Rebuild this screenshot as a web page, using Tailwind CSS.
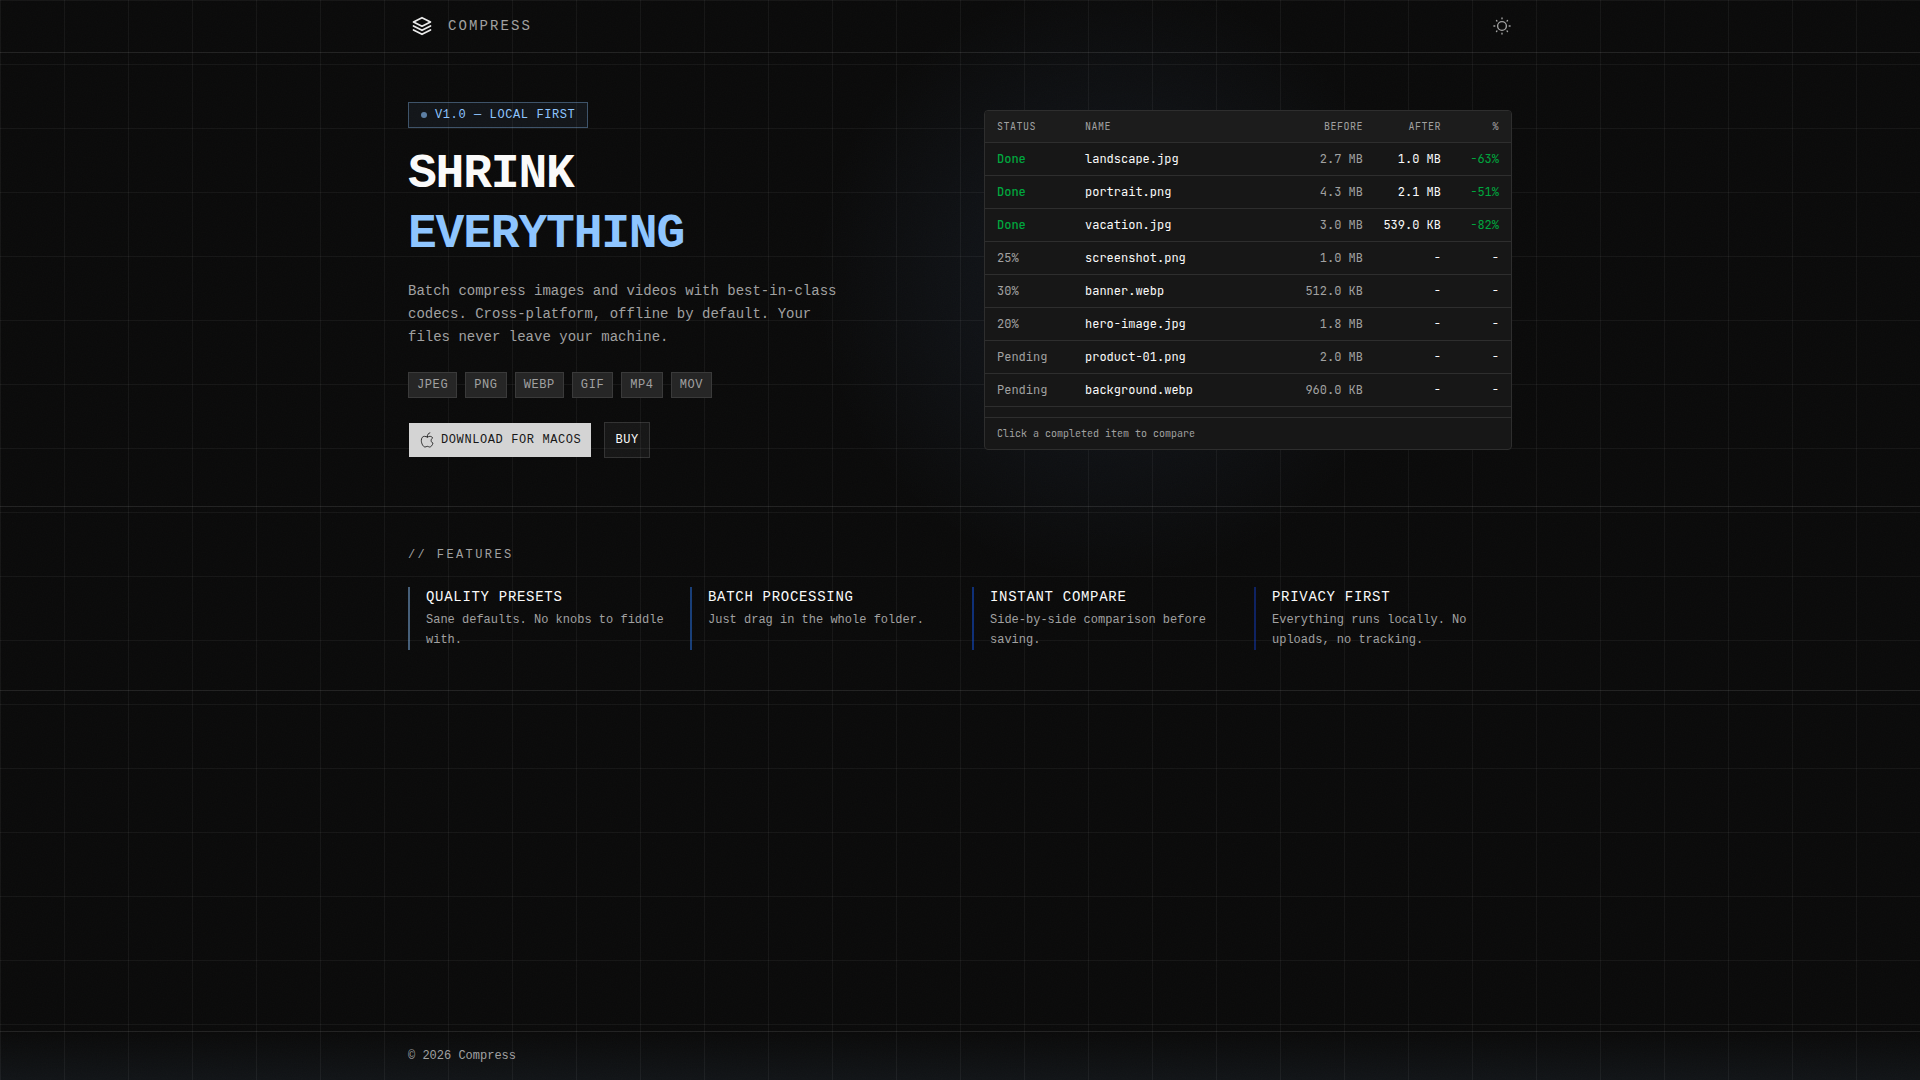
<!DOCTYPE html>
<html lang="en">
<head>
  <meta charset="UTF-8">
  <meta name="viewport" content="width=device-width, initial-scale=1">
  <title>Compress</title>
  <script src="https://cdn.jsdelivr.net/npm/@tailwindcss/browser@4"></script>
</head>
<body class="relative isolate flex min-h-screen flex-col bg-[#0a0a0a] font-['Liberation_Mono',monospace] text-neutral-50">

  <!-- background: glows, grid, grain -->
  <div class="pointer-events-none absolute inset-0 -z-10 overflow-hidden" aria-hidden="true">
    <div class="absolute inset-0 bg-[radial-gradient(ellipse_300px_300px_at_58%_26%,#7fb0ff12,#7fb0ff0c_50%,transparent)]"></div>
    <div class="absolute inset-x-0 bottom-0 h-12 bg-linear-to-t from-[#8ec5ff0e] to-transparent"></div>
    <div class="absolute inset-0 bg-[linear-gradient(to_right,#ffffff0d_1px,transparent_1px),linear-gradient(to_bottom,#ffffff0d_1px,transparent_1px)] bg-size-[64px_64px]"></div>
    <svg class="absolute inset-0 size-full opacity-[0.02]">
      <filter id="grain"><feTurbulence type="fractalNoise" baseFrequency="0.8" numOctaves="4" stitchTiles="stitch" /></filter>
      <rect width="100%" height="100%" filter="url(#grain)" />
    </svg>
  </div>

  <header class="border-b border-white/10">
    <div class="mx-auto flex h-13 w-full max-w-6xl items-center justify-between px-6">
      <a href="#" class="flex items-center gap-3">
        <svg class="size-7" viewBox="0 0 28 28" fill="none" stroke="#ebebeb" stroke-width="1.7" stroke-linejoin="round" stroke-linecap="round">
          <path d="M14 5.700 22.500 9.900 14 14.200 5.500 9.900Z" />
          <path d="m5.500 13.900 8.500 4.400 8.500-4.400M5.500 17.900l8.500 4.400 8.500-4.400" />
        </svg>
        <span class="text-sm tracking-[0.15em] text-neutral-400">COMPRESS</span>
      </a>
      <button type="button" aria-label="Toggle theme" class="text-neutral-400">
        <svg class="size-5" viewBox="0 0 20 20" fill="none" stroke="currentColor" stroke-width="1.4" stroke-linecap="round">
          <circle cx="10" cy="10" r="4.400" />
          <path d="M10 1.900v.9M10 17.200v.9M1.900 10h.9M17.200 10h.9M4.500 4.500l.4.400M15.100 15.100l.4.400M4.500 15.500l.4-.4M15.100 4.900l.4-.4" />
        </svg>
      </button>
    </div>
  </header>

  <main class="flex-1">
    <section class="border-b border-white/10">
      <div class="mx-auto grid w-full max-w-6xl items-center gap-12 px-6 py-12 lg:grid-cols-2">
        <div>
          <div class="flex h-[27px] items-end">
            <span class="flex items-center gap-2 border border-[#8ec5ff]/35 bg-[#8ec5ff]/6 px-3 py-1 text-xs tracking-wider text-[#8ec5ff]">
              <span class="size-1.5 rounded-full bg-[#8ec5ff]/60"></span>V1.0 — LOCAL FIRST
            </span>
          </div>
          <h1 class="mt-4 text-5xl leading-tight font-bold tracking-tight">
            SHRINK<br><span class="text-[#8ec5ff]">EVERYTHING</span>
          </h1>
          <p class="mt-4 max-w-md text-sm leading-relaxed text-neutral-400">Batch compress images and videos with best-in-class codecs. Cross-platform, offline by default. Your files never leave your machine.</p>
          <ul class="mt-6 flex flex-wrap gap-2 text-xs tracking-wider text-neutral-400">
            <li class="border border-[#3a3a3a] bg-[#262626] px-2 py-1">JPEG</li>
            <li class="border border-[#3a3a3a] bg-[#262626] px-2 py-1">PNG</li>
            <li class="border border-[#3a3a3a] bg-[#262626] px-2 py-1">WEBP</li>
            <li class="border border-[#3a3a3a] bg-[#262626] px-2 py-1">GIF</li>
            <li class="border border-[#3a3a3a] bg-[#262626] px-2 py-1">MP4</li>
            <li class="border border-[#3a3a3a] bg-[#262626] px-2 py-1">MOV</li>
          </ul>
          <div class="mt-6 flex gap-3 text-xs tracking-wider">
            <button type="button" class="flex h-9 items-center gap-1.5 border border-transparent bg-[#d4d4d4] bg-clip-padding px-2.5 text-neutral-900">
              <svg class="size-4" viewBox="0 0 24 24" fill="none" stroke="currentColor" stroke-width="1.3" stroke-linejoin="round" stroke-linecap="round">
                <path d="M12.500 7.500c-1.500 0-2.500-1-4.300-1C5.300 6.500 3.500 9 3.500 12.800c0 4.300 2.800 9.700 5.600 9.700 1.400 0 2-1 3.400-1s2 1 3.400 1c2.300 0 4.300-2.900 5.100-5.800-1.900-.8-2.800-2.200-2.800-3.900 0-1.700.9-3.100 2.300-3.900-.9-1.500-2.300-2.400-4.200-2.400-1.500 0-2.400 1-3.800 1Z" />
                <path d="M12.500 6.500c0-2.700 1.400-4.500 3.800-5.200" />
              </svg>
              DOWNLOAD FOR MACOS
            </button>
            <button type="button" class="h-9 border border-white/12 bg-white/5 px-2.5">BUY</button>
          </div>
        </div>

        <div class="overflow-hidden rounded border border-[#2e2e2e] bg-[#171717] font-['JetBrains_Mono','Liberation_Mono',monospace]">
          <table class="w-full table-fixed text-right text-xs">
            <thead>
              <tr class="border-b border-[#2e2e2e] bg-[#1c1c1c] text-[10px] leading-[15px] tracking-wider text-neutral-400">
                <th class="w-22 px-3 py-2 text-left font-normal">STATUS</th>
                <th class="px-3 py-2 text-left font-normal">NAME</th>
                <th class="w-30 px-3 py-2 font-normal">BEFORE</th>
                <th class="w-[78px] px-3 py-2 font-normal">AFTER</th>
                <th class="w-[58px] px-3 py-2 font-normal">%</th>
              </tr>
            </thead>
            <tbody id="queue"></tbody>
          </table>
          <p class="mt-2.5 border-t border-[#2e2e2e] px-3 py-2 text-[10px] leading-[15px] text-neutral-400">Click a completed item to compare</p>
        </div>
      </div>
    </section>

    <section class="border-b border-white/10">
      <div class="mx-auto w-full max-w-6xl px-6 py-10">
        <h2 class="text-xs tracking-[0.2em] text-neutral-400">// FEATURES</h2>
        <div class="mt-6 grid gap-6 md:grid-cols-4">
          <article class="border-l-2 border-[#8ec5ff]/45 pl-4">
            <h3 class="text-sm tracking-wider">QUALITY PRESETS</h3>
            <p class="mt-1 text-xs leading-relaxed text-neutral-400">Sane defaults. No knobs to fiddle with.</p>
          </article>
          <article class="border-l-2 border-[#2b7fff]/45 pl-4">
            <h3 class="text-sm tracking-wider">BATCH PROCESSING</h3>
            <p class="mt-1 text-xs leading-relaxed text-neutral-400">Just drag in the whole folder.</p>
          </article>
          <article class="border-l-2 border-[#155dfc]/45 pl-4">
            <h3 class="text-sm tracking-wider">INSTANT COMPARE</h3>
            <p class="mt-1 text-xs leading-relaxed text-neutral-400">Side-by-side comparison before saving.</p>
          </article>
          <article class="border-l-2 border-[#1447e6]/40 pl-4">
            <h3 class="text-sm tracking-wider">PRIVACY FIRST</h3>
            <p class="mt-1 text-xs leading-relaxed text-neutral-400">Everything runs locally. No uploads, no tracking.</p>
          </article>
        </div>
      </div>
    </section>
  </main>

  <footer class="border-t border-white/10">
    <p class="mx-auto w-full max-w-6xl px-6 py-4 text-xs text-neutral-400">© 2026 Compress</p>
  </footer>

  <script>
    const files = [
      ['Done', 'landscape.jpg', '2.7 MB', '1.0 MB', '-63%'],
      ['Done', 'portrait.png', '4.3 MB', '2.1 MB', '-51%'],
      ['Done', 'vacation.jpg', '3.0 MB', '539.0 KB', '-82%'],
      ['25%', 'screenshot.png', '1.0 MB', '-', '-'],
      ['30%', 'banner.webp', '512.0 KB', '-', '-'],
      ['20%', 'hero-image.jpg', '1.8 MB', '-', '-'],
      ['Pending', 'product-01.png', '2.0 MB', '-', '-'],
      ['Pending', 'background.webp', '960.0 KB', '-', '-'],
    ];

    document.getElementById('queue').innerHTML = files.map(([status, name, before, after, pct]) => {
      const done = status === 'Done';
      return `<tr class="border-b border-[#2e2e2e] ${done ? 'cursor-pointer' : ''}">
        <td class="px-3 py-2 text-left ${done ? 'font-medium text-[#00a63e]' : 'text-neutral-400'}">${status}</td>
        <td class="px-3 py-2 text-left">${name}</td>
        <td class="px-3 py-2 text-neutral-400">${before}</td>
        <td class="py-2 pr-3 whitespace-nowrap">${after}</td>
        <td class="px-3 py-2 ${done ? 'text-[#00a63e]' : ''}">${pct}</td>
      </tr>`;
    }).join('');
  </script>
</body>
</html>
